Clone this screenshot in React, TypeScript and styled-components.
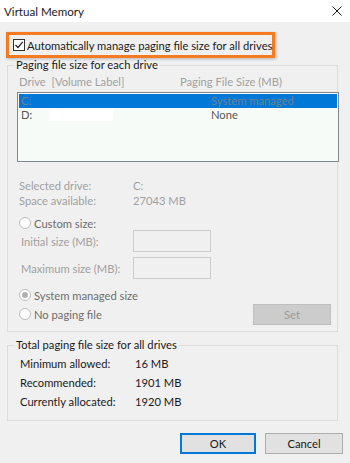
import React from "react"
import styled, { createGlobalStyle } from "styled-components"

const GlobalStyle = createGlobalStyle`
  html, body {
    margin: 0;
    padding: 0;
    background: #f0f0f0;
  }
  * {
    box-sizing: border-box;
  }
`

export default function App() {
  return (
    <Window>
      <GlobalStyle />
      <TitleBar>
        <Title>Virtual Memory</Title>
        <svg width='10' height='10' viewBox='0 0 10 10'>
          <path d='M0.5 0.5 L9.5 9.5 M9.5 0.5 L0.5 9.5' stroke='#1a1a1a' strokeWidth='1' />
        </svg>
      </TitleBar>
      <Content>
        <Highlight>
          <CheckBox>
            <svg width='10' height='10' viewBox='0 0 10 10'>
              <path d='M1.5 5 L4 7.5 L8.8 1.8' stroke='#222' strokeWidth='1.2' fill='none' />
            </svg>
          </CheckBox>
          <Label>Automatically manage paging file size for all drives</Label>
        </Highlight>

        <Group pb='6px'>
          <Legend>Paging file size for each drive</Legend>
          <Header>
            <HeaderCell width='161px'>Drive&nbsp;&nbsp;[Volume Label]</HeaderCell>
            <HeaderCell>Paging File Size (MB)</HeaderCell>
          </Header>
          <ListBox>
            <ListRow selected>
              <DriveCell>C:</DriveCell>
              <SizeCell>System managed</SizeCell>
            </ListRow>
            <ListRow>
              <DriveCell>
                D:
                <Blank />
              </DriveCell>
              <SizeCell>None</SizeCell>
            </ListRow>
          </ListBox>
          <InfoBlock>
            <InfoRow>
              <InfoLabel>Selected drive:</InfoLabel>
              <span>C:</span>
            </InfoRow>
            <InfoRow>
              <InfoLabel>Space available:</InfoLabel>
              <span>27043 MB</span>
            </InfoRow>
          </InfoBlock>
          <RadioRow top='8px'>
            <Radio />
            <RadioText>Custom size:</RadioText>
          </RadioRow>
          <InputRow top='0px'>
            <InputLabel>Initial size (MB):</InputLabel>
            <TextBox />
          </InputRow>
          <InputRow top='5px'>
            <InputLabel>Maximum size (MB):</InputLabel>
            <TextBox />
          </InputRow>
          <RadioRow top='9px'>
            <Radio checked />
            <RadioText>System managed size</RadioText>
          </RadioRow>
          <LastRow>
            <RadioGroup>
              <Radio />
              <RadioText>No paging file</RadioText>
            </RadioGroup>
            <SetButton>Set</SetButton>
          </LastRow>
        </Group>

        <Group pb='9px' top='6px'>
          <Legend>Total paging file size for all drives</Legend>
          <TotalList>
            <TotalRow>
              <TotalLabel>Minimum allowed:</TotalLabel>
              <span>16 MB</span>
            </TotalRow>
            <TotalRow>
              <TotalLabel>Recommended:</TotalLabel>
              <span>1901 MB</span>
            </TotalRow>
            <TotalRow>
              <TotalLabel>Currently allocated:</TotalLabel>
              <span>1920 MB</span>
            </TotalRow>
          </TotalList>
        </Group>

        <Buttons>
          <DialogButton primary width='76px'>OK</DialogButton>
          <DialogButton width='78px'>Cancel</DialogButton>
        </Buttons>
      </Content>
    </Window>
  )
}

const Window = styled.div`
  width: 350px;
  height: 463px;
  overflow: hidden;
  background: #f0f0f0;
  font-family: Lato, "Noto Sans", sans-serif;
  font-size: 11.2px;
  color: #1a1a1a;
`
const TitleBar = styled.div`
  height: 22px;
  background: #ffffff;
  display: flex;
  align-items: center;
  justify-content: space-between;
  padding: 0 8px 0 4px;
`
const Title = styled.span`
  color: #222;
  font-size: 11.6px;
`
const Content = styled.div`
  padding: 0 12px 0 7px;
`
const Highlight = styled.div`
  margin: 10px 0 0 -1px;
  width: 269px;
  height: 26px;
  border: 3px solid #f47b20;
  box-shadow: 1px 1px 3px rgba(0, 0, 0, 0.25);
  display: flex;
  align-items: center;
  padding-left: 4px;
  gap: 2px;
`
const CheckBox = styled.div`
  width: 12px;
  height: 12px;
  border: 1px solid #333;
  background: #fff;
  display: flex;
  align-items: center;
  justify-content: center;
`
const Label = styled.span`
  white-space: nowrap;
`
const Group = styled.fieldset<{ pb: string; top?: string }>`
  margin: ${({ top }) => top || "0"} 0 0 0;
  width: 331px;
  border: 1px solid #dcdcdc;
  padding: 0 0 ${({ pb }) => pb} 6px;
  min-width: 0;
`
const Legend = styled.legend`
  padding: 0 2px;
  line-height: 14px;
  height: 14px;
  white-space: nowrap;
`
const Header = styled.div`
  display: flex;
  margin-top: 2px;
  padding-left: 5px;
  line-height: 15px;
  color: #a0a0a0;
`
const HeaderCell = styled.span<{ width?: string }>`
  width: ${({ width }) => width || "auto"};
  white-space: nowrap;
`
const ListBox = styled.div`
  margin: 3px 0 0 3px;
  width: 322px;
  height: 70px;
  border: 1px solid #828790;
  background: #f6fbf8;
  padding: 1px 1px 0 1px;
`
const ListRow = styled.div<{ selected?: boolean }>`
  display: flex;
  height: 14px;
  align-items: center;
  background: ${({ selected }) => (selected ? "#0078d7" : "transparent")};
  color: ${({ selected }) => (selected ? "#6f7f8f" : "#555")};
  line-height: 14px;
`
const DriveCell = styled.span`
  width: 192px;
  padding-left: 2px;
  display: flex;
  align-items: center;
`
const Blank = styled.span`
  width: 64px;
  height: 11px;
  background: #ffffff;
  margin-left: 17px;
`
const SizeCell = styled.span`
  white-space: nowrap;
`
const InfoBlock = styled.div`
  margin-top: 16px;
  padding-left: 5px;
  color: #a0a0a0;
`
const InfoRow = styled.div`
  display: flex;
  line-height: 15px;
`
const InfoLabel = styled.span`
  width: 114px;
`
const RadioRow = styled.div<{ top: string }>`
  margin-top: ${({ top }) => top};
  padding-left: 5px;
  height: 14px;
  display: flex;
  align-items: center;
  gap: 3px;
`
const Radio = styled.span<{ checked?: boolean }>`
  width: 12px;
  height: 12px;
  border-radius: 50%;
  border: 1px solid #bcbcbc;
  background: #fff;
  display: flex;
  align-items: center;
  justify-content: center;
  &::after {
    content: "";
    width: 6px;
    height: 6px;
    border-radius: 50%;
    background: ${({ checked }) => (checked ? "#b0b0b0" : "transparent")};
  }
`
const RadioText = styled.span`
  color: #6d6d6d;
  white-space: nowrap;
`
const InputRow = styled.div<{ top: string }>`
  margin-top: ${({ top }) => top};
  height: 22px;
  display: flex;
  align-items: center;
  padding-left: 7px;
  color: #a0a0a0;
`
const InputLabel = styled.span`
  width: 112px;
  white-space: nowrap;
`
const TextBox = styled.div`
  width: 78px;
  height: 22px;
  border: 1px solid #cccccc;
  background: #f0f0f0;
`
const LastRow = styled.div`
  margin-top: 1px;
  height: 22px;
  display: flex;
  align-items: center;
  justify-content: space-between;
  padding: 0 6px 0 5px;
`
const RadioGroup = styled.div`
  display: flex;
  align-items: center;
  gap: 3px;
`
const SetButton = styled.div`
  width: 78px;
  height: 21px;
  background: #cccccc;
  border: 1px solid #bfbfbf;
  color: #9a9a9a;
  display: flex;
  align-items: center;
  justify-content: center;
`
const TotalList = styled.div`
  margin-top: 2px;
  padding-left: 6px;
`
const TotalRow = styled.div`
  display: flex;
  line-height: 19px;
`
const TotalLabel = styled.span`
  width: 115px;
`
const Buttons = styled.div`
  margin: 12px -5px 0 0;
  display: flex;
  justify-content: flex-end;
  gap: 9px;
`
const DialogButton = styled.div<{ primary?: boolean; width: string }>`
  width: ${({ width }) => width};
  height: 21px;
  background: #e1e1e1;
  border: ${({ primary }) => (primary ? "2px solid #0078d7" : "1px solid #adadad")};
  display: flex;
  align-items: center;
  justify-content: center;
`
